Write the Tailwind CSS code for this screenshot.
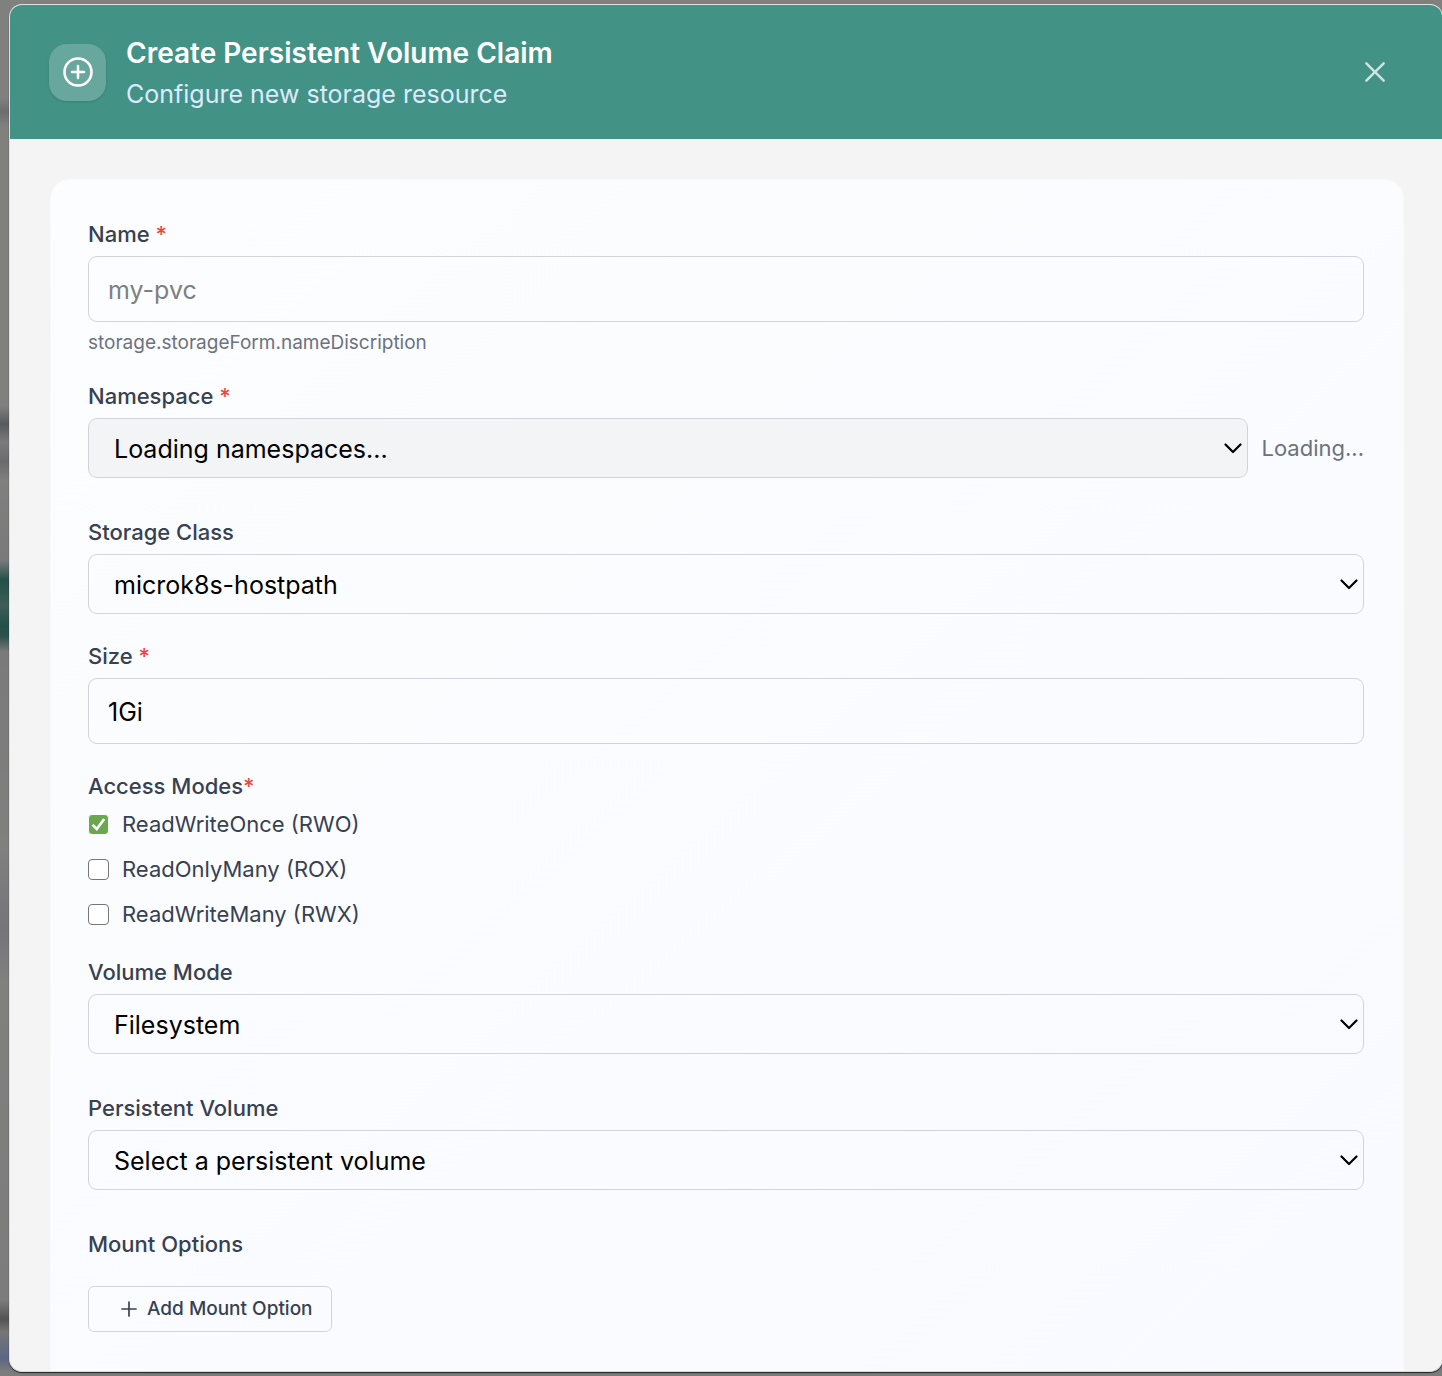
<!DOCTYPE html>
<html lang="en">
<head>
    <meta charset="UTF-8">
    <meta name="viewport" content="width=device-width, initial-scale=1.0">
    <title>Create Persistent Volume Claim</title>
    <script src="https://cdn.jsdelivr.net/npm/@tailwindcss/browser@4"></script>
</head>
<body class="bg-[#7f7f7f] font-[Inter,'Noto_Sans',sans-serif] text-[#374151]">
    <!-- Blurred page behind the dialog -->
    <div class="flex h-screen overflow-hidden bg-[linear-gradient(to_bottom,#80807f_0px,#80807f_98px,#6c6d6f_112px,#80807f_126px,#80807f_406px,#58595d_424px,#7b7b7b_442px,#6a6b6e_462px,#80807f_480px,#7a7a7a_560px,#24504a_580px,#3d5c57_606px,#24504a_626px,#2c514c_636px,#7a7a7a_652px,#80807f_850px,#75757a_930px,#80807f_980px,#7c7c7c_1300px,#535354_1319px,#767678_1332px,#5c6684_1358px,#7c7c7c_1372px)] pt-1 pb-1 pl-[9px]">
        <div role="dialog" aria-labelledby="dialogTitle" class="-mr-px flex min-w-0 flex-1 flex-col overflow-hidden rounded-[13px] border border-[#dfe3e2] border-b-[#d9dbdf] bg-[#f4f4f4] shadow-[0_1px_1px_#222]">

            <header class="flex shrink-0 items-center bg-[#439286] py-[26px] pr-10 pl-[39px]">
                <div class="flex size-[57px] items-center justify-center rounded-[18px] bg-white/20 text-white shadow-sm">
                    <svg class="size-9" viewBox="0 0 24 24" fill="none" stroke="currentColor" stroke-width="1.7" stroke-linecap="round" stroke-linejoin="round">
                        <circle cx="12" cy="12" r="9"></circle>
                        <path d="M12 8v8M8 12h8"></path>
                    </svg>
                </div>
                <div class="ml-5 flex-1">
                    <h1 id="dialogTitle" class="text-[28px] leading-[44px] font-semibold text-white">Create Persistent Volume Claim</h1>
                    <p class="text-[25px] leading-[38px] text-[#dbeafe]">Configure new storage resource</p>
                </div>
                <button type="button" aria-label="Close" class="flex size-[54px] items-center justify-center text-[#d0e4e1]">
                    <svg class="size-8" viewBox="0 0 24 24" fill="none" stroke="currentColor" stroke-width="1.8" stroke-linecap="round">
                        <path d="M5.5 5.5l13 13M18.5 5.5l-13 13"></path>
                    </svg>
                </button>
            </header>

            <main class="flex-1 overflow-hidden pt-10 pr-[38px] pl-10">
                <form class="min-h-full rounded-t-[20px] border border-b-0 border-[#f8f9fb] bg-linear-to-br from-[#fcfdfe] to-[#f9faff] pt-[38px] pr-[39px] pb-10 pl-[37px]">
                    <div>
                        <label for="name" class="mb-[6px] block text-[22px] leading-8 font-medium">Name <span class="text-[#ef4444]">*</span></label>
                        <input id="name" type="text" placeholder="my-pvc" class="block h-[66px] w-full rounded-[9px] border border-[#d1d5db] bg-transparent px-[19px] pt-[2px] text-[25px] text-black placeholder:text-[#7f7f7f]">
                        <p class="mt-[7px] text-[19px] leading-7 text-[#6b7280]">storage.storageForm.nameDiscription</p>
                    </div>

                    <div class="mt-[23px]">
                        <label for="namespace" class="mb-[6px] block text-[22px] leading-8 font-medium">Namespace <span class="text-[#ef4444]">*</span></label>
                        <div class="flex items-center gap-[13px]">
                            <div class="relative flex-1">
                                <select id="namespace" disabled class="block h-[60px] w-full appearance-none rounded-[9px] border border-[#d1d5db] bg-[#f3f4f6] px-[25px] pt-[3px] text-[25px] text-black opacity-100">
                                    <option>Loading namespaces...</option>
                                </select>
                                <svg class="pointer-events-none absolute top-1/2 right-[6px] -mt-[5px] h-[11px] w-[18px] text-black" viewBox="0 0 18 11" fill="none" stroke="currentColor" stroke-width="2.2" stroke-linecap="round" stroke-linejoin="round">
                                    <path d="M1.5 1.5L9 9L16.5 1.5"></path>
                                </svg>
                            </div>
                            <span class="text-[22px] text-[#6b7280]">Loading...</span>
                        </div>
                    </div>

                    <div class="mt-[38px]">
                        <label for="storageClass" class="mb-[6px] block text-[22px] leading-8 font-medium">Storage Class</label>
                        <div class="relative">
                            <select id="storageClass" class="block h-[60px] w-full appearance-none rounded-[9px] border border-[#d1d5db] bg-transparent px-[25px] pt-[3px] text-[25px] text-black">
                                <option>microk8s-hostpath</option>
                            </select>
                            <svg class="pointer-events-none absolute top-1/2 right-[6px] -mt-[5px] h-[11px] w-[18px] text-black" viewBox="0 0 18 11" fill="none" stroke="currentColor" stroke-width="2.2" stroke-linecap="round" stroke-linejoin="round">
                                <path d="M1.5 1.5L9 9L16.5 1.5"></path>
                            </svg>
                        </div>
                    </div>

                    <div class="mt-[26px]">
                        <label for="size" class="mb-[6px] block text-[22px] leading-8 font-medium">Size <span class="text-[#ef4444]">*</span></label>
                        <input id="size" type="text" value="1Gi" class="block h-[66px] w-full rounded-[9px] border border-[#d1d5db] bg-transparent px-[19px] pt-[2px] text-[25px] text-black">
                    </div>

                    <fieldset class="mt-[26px]">
                        <legend class="mb-[6px] text-[22px] leading-8 font-medium">Access Modes<span class="text-[#ef4444]">*</span></legend>
                        <div class="flex flex-col items-start gap-[13px]">
                            <label class="flex items-center gap-[13px] text-[22px] leading-8">
                                <span class="grid place-items-center">
                                    <input type="checkbox" checked class="peer col-start-1 row-start-1 size-[21px] appearance-none rounded-[4px] border border-[#767676] bg-white checked:border-[#fcfdfe] checked:bg-[#6aa84f]">
                                    <svg class="pointer-events-none invisible col-start-1 row-start-1 size-[21px] text-white peer-checked:visible" viewBox="0 0 21 21" fill="none" stroke="currentColor" stroke-width="2.6">
                                        <path d="M4.5 10.8L8.8 15L16.2 5"></path>
                                    </svg>
                                </span>
                                ReadWriteOnce (RWO)
                            </label>
                            <label class="flex items-center gap-[13px] text-[22px] leading-8">
                                <input type="checkbox" class="size-[21px] appearance-none rounded-[4px] border border-[#767676] bg-white checked:bg-[#6aa84f]">
                                ReadOnlyMany (ROX)
                            </label>
                            <label class="flex items-center gap-[13px] text-[22px] leading-8">
                                <input type="checkbox" class="size-[21px] appearance-none rounded-[4px] border border-[#767676] bg-white checked:bg-[#6aa84f]">
                                ReadWriteMany (RWX)
                            </label>
                        </div>
                    </fieldset>

                    <div class="mt-[26px]">
                        <label for="volumeMode" class="mb-[6px] block text-[22px] leading-8 font-medium">Volume Mode</label>
                        <div class="relative">
                            <select id="volumeMode" class="block h-[60px] w-full appearance-none rounded-[9px] border border-[#d1d5db] bg-transparent px-[25px] pt-[3px] text-[25px] text-black">
                                <option>Filesystem</option>
                            </select>
                            <svg class="pointer-events-none absolute top-1/2 right-[6px] -mt-[5px] h-[11px] w-[18px] text-black" viewBox="0 0 18 11" fill="none" stroke="currentColor" stroke-width="2.2" stroke-linecap="round" stroke-linejoin="round">
                                <path d="M1.5 1.5L9 9L16.5 1.5"></path>
                            </svg>
                        </div>
                    </div>

                    <div class="mt-[38px]">
                        <label for="persistentVolume" class="mb-[6px] block text-[22px] leading-8 font-medium">Persistent Volume</label>
                        <div class="relative">
                            <select id="persistentVolume" class="block h-[60px] w-full appearance-none rounded-[9px] border border-[#d1d5db] bg-transparent px-[25px] pt-[3px] text-[25px] text-black">
                                <option>Select a persistent volume</option>
                            </select>
                            <svg class="pointer-events-none absolute top-1/2 right-[6px] -mt-[5px] h-[11px] w-[18px] text-black" viewBox="0 0 18 11" fill="none" stroke="currentColor" stroke-width="2.2" stroke-linecap="round" stroke-linejoin="round">
                                <path d="M1.5 1.5L9 9L16.5 1.5"></path>
                            </svg>
                        </div>
                    </div>

                    <div class="mt-[38px]">
                        <h2 class="mb-[26px] text-[22px] leading-8 font-medium">Mount Options</h2>
                        <button type="button" class="flex h-[46px] items-center gap-[10px] rounded-[6px] border border-[#d1d5db] pr-[18px] pl-8 text-[19px] font-medium">
                            <svg class="size-4" viewBox="0 0 16 16" fill="none" stroke="currentColor" stroke-width="1.7" stroke-linecap="round">
                                <path d="M8 1v14M1 8h14"></path>
                            </svg>
                            Add Mount Option
                        </button>
                    </div>
                </form>
            </main>
        </div>
    </div>
</body>
</html>
